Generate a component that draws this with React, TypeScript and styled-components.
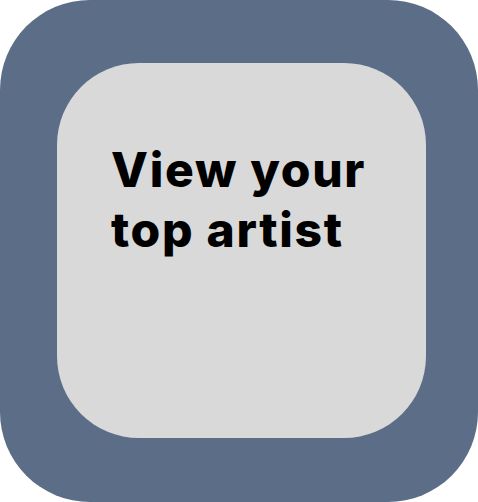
import React from "react";
import styled, { createGlobalStyle } from "styled-components";

const Global = createGlobalStyle`
  html, body { margin: 0; padding: 0; background: #ffffff; }
  body { font-family: Inter, "Noto Sans", sans-serif; }
`;

const Frame = styled.div`
  box-sizing: border-box;
  width: 478px;
  height: 502px;
  background: #5c6d88;
  border-radius: 90px;
  padding: 63px 52px 64px 57px;
  display: flex;
`;

const Card = styled.div`
  box-sizing: border-box;
  width: 369px;
  height: 375px;
  background: #d9d9d9;
  border-radius: 82px;
  padding: 77px 0 0 54px;
`;

const Title = styled.h1`
  margin: 0;
  font-family: Inter, "Noto Sans", sans-serif;
  font-weight: 800;
  font-size: 48px;
  line-height: 60px;
  letter-spacing: 1.7px;
  color: #000000;
  white-space: nowrap;
`;

export default function App() {
  return (
    <>
      <Global />
      <Frame>
        <Card>
          <Title>
            View your
            <br />
            top artist
          </Title>
        </Card>
      </Frame>
    </>
  );
}
